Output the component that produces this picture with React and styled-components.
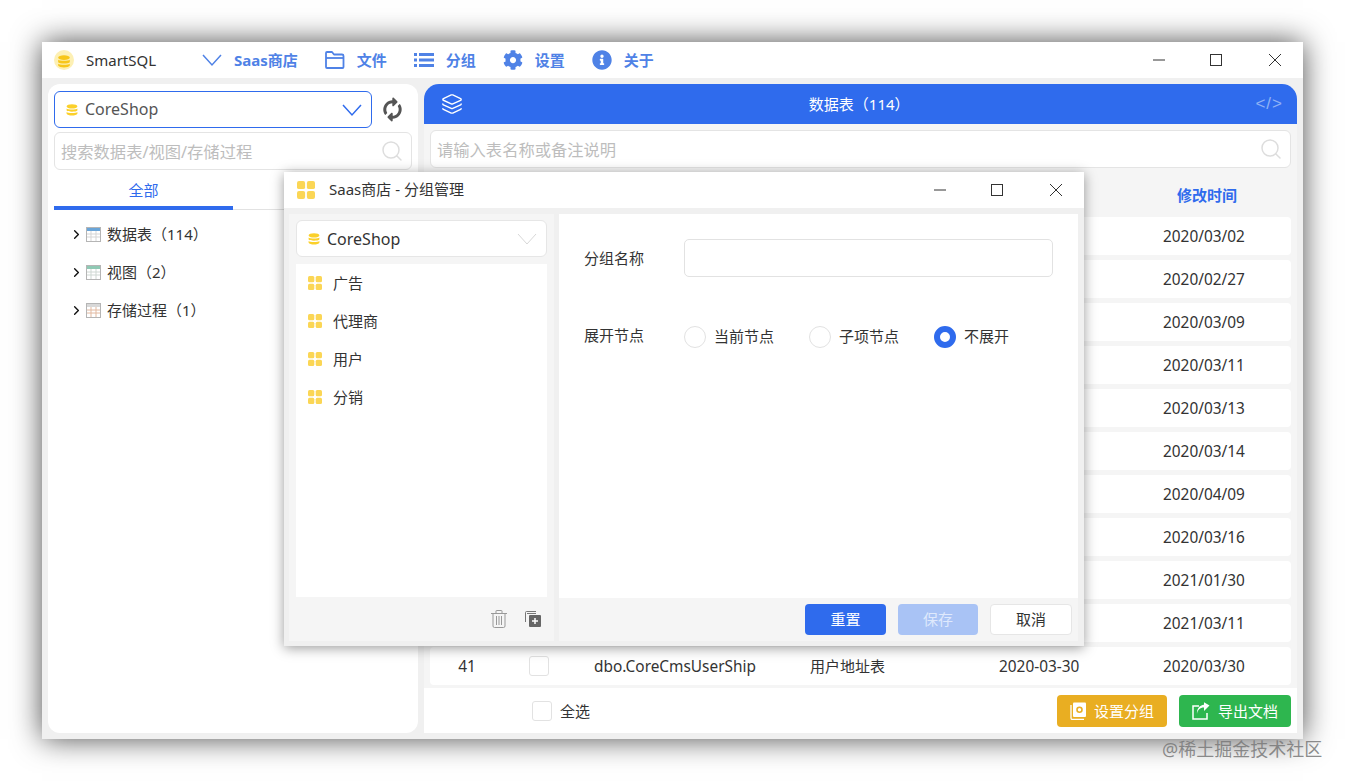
import React from 'react';
import styled, { createGlobalStyle } from 'styled-components';
import { ChevronRight, Layers, Search } from 'lucide-react';
import { FaCog, FaInfoCircle, FaSyncAlt } from 'react-icons/fa';

const blue = '#2f6bed';
const menuBlue = '#4f82e6';
const text = '#333';

const GlobalStyle = createGlobalStyle`
	html, body {
		margin: 0;
		background: #fff;
		font-family: "Noto Sans", "Noto Sans CJK SC", sans-serif;
		font-size: 15px;
		color: ${text};
	}
	* {
		box-sizing: border-box;
	}
`;

const Page = styled.div`
	position: relative;
	width: 1345px;
	height: 781px;
	padding: 42px;
	overflow: hidden;
`;

const Window = styled.div`
	position: relative;
	width: 1261px;
	height: 697px;
	background: #f0f0f0;
	box-shadow: 0 0 28px rgba(0, 0, 0, 0.7);
	display: flex;
	flex-direction: column;
`;

// CJK glyphs sit a little low in a flex row, this lifts the words and not the icons
const Txt = styled.span`
	padding-bottom: 2px;
`;

const TitleBar = styled.div`
	height: 36px;
	flex: none;
	background: #fff;
	display: flex;
	align-items: center;
	padding-left: 12px;
`;

const AppName = styled.span`
	font-size: 15px;
	margin-left: 12px;
	width: 116px;
	padding-bottom: 1px;
`;

const Menu = styled.div`
	display: flex;
	align-items: center;
	gap: 27px;
	flex: 1;
`;

const MenuItem = styled.div`
	display: flex;
	align-items: center;
	gap: 12px;
	color: ${menuBlue};
	font-size: 15px;
	font-weight: 700;
	svg {
		flex: none;
	}
`;

const WinControls = styled.div`
	display: flex;
	align-items: center;
	color: ${text};
	padding-right: 22px;
	gap: 45px;
	svg:last-child {
		margin-left: 2px;
	}
`;

const Body = styled.div`
	flex: 1;
	display: flex;
	gap: 6px;
	padding: 6px;
	min-height: 0;
`;

const LeftPanel = styled.aside`
	width: 370px;
	flex: none;
	background: #fff;
	border-radius: 12px;
	padding: 7px 6px;
`;

const SelectRow = styled.div`
	display: flex;
	align-items: center;
	color: #555;
`;

const RefreshSlot = styled.div`
	width: 40px;
	display: flex;
	justify-content: center;
	svg {
		transform: rotate(-45deg);
	}
`;

const Select = styled.div`
	flex: none;
	width: ${(p) => (p.$focus ? '318px' : '100%')};
	height: 37px;
	display: flex;
	align-items: center;
	gap: 7px;
	padding: 0 9px 0 11px;
	background: #fff;
	border-radius: 6px;
	border: 1px solid ${(p) => (p.$focus ? blue : '#e6e6e6')};
	font-size: 16px;
	span {
		flex: 1;
		padding-bottom: ${(p) => (p.$focus ? '2px' : '0')};
	}
`;

const SearchBox = styled.div`
	height: 38px;
	margin: ${(p) => p.$margin || '4px 0 0'};
	border: 1px solid #e4e4e4;
	border-radius: 6px;
	background: #fff;
	display: flex;
	align-items: center;
	justify-content: space-between;
	padding: 0 7px 0 6px;
	color: #bdbdbd;
	font-size: 16.3px;
`;

const Tabs = styled.div`
	height: 40px;
	border-bottom: 1px solid #e2e2e2;
	display: flex;
`;

const Tab = styled.div`
	width: 179px;
	height: 40px;
	padding-top: 2px;
	border-bottom: 4px solid ${blue};
	color: ${blue};
	font-size: 15px;
	display: flex;
	align-items: center;
	justify-content: center;
`;

const Tree = styled.div`
	margin-top: 5px;
	padding-left: 15px;
`;

const TreeRow = styled.div`
	height: 38px;
	display: flex;
	align-items: center;
	font-size: 15px;
	color: #333;
	gap: 6px;
	svg:first-child {
		color: #111;
		margin-right: -4px;
	}
`;

const RightPanel = styled.main`
	flex: 1;
	min-width: 0;
	display: flex;
	flex-direction: column;
	background: #f5f5f5;
	border-radius: 15px 15px 0 0;
`;

const BlueHeader = styled.div`
	height: 40px;
	flex: none;
	background: ${blue};
	border-radius: 15px 15px 0 0;
	color: #fff;
	font-size: 15px;
	display: flex;
	align-items: center;
	justify-content: space-between;
	padding: 0 14px 0 17px;
`;

const CodeMark = styled.span`
	color: #8fb2f5;
	font-size: 17px;
	letter-spacing: 1px;
	font-family: "Liberation Sans", sans-serif;
`;

const Table = styled.div`
	flex: 1;
	display: flex;
	flex-direction: column;
	gap: 5px;
	padding: 0 6px;
`;

const cols = '72px 92px 216px 189px 164px 1fr';

const HeadRow = styled.div`
	height: 39px;
	display: grid;
	grid-template-columns: ${cols};
	align-items: center;
	padding-top: 3px;
`;

const HeadCell = styled.div`
	grid-column: 6;
	color: ${blue};
	font-size: 15px;
	font-weight: 700;
	margin-left: 14px;
`;

const Row = styled.div`
	height: 38px;
	flex: none;
	background: #fff;
	border-radius: 4px;
	display: grid;
	grid-template-columns: ${cols};
	align-items: center;
	font-size: 15px;
`;

const Num = styled.div`
	text-align: center;
	font-size: 15.5px;
	padding-left: 2px;
`;

const LatinCell = styled.span`
	font-size: 15.4px;
	grid-column: ${(p) => p.$col || 'auto'};
`;

const Checkbox = styled.div`
	width: 20px;
	height: 20px;
	flex: none;
	border: 1px solid #e2e2e2;
	border-radius: 3px;
	background: #fff;
	margin-left: ${(p) => p.$left || 0}px;
`;

const Footer = styled.div`
	height: 45px;
	margin-top: 3px;
	flex: none;
	background: #fff;
	display: flex;
	align-items: center;
	padding: 0 6px 0 108px;
	font-size: 15px;
	gap: 8px;
	white-space: nowrap;
`;

const FooterActions = styled.div`
	margin-left: auto;
	display: flex;
	gap: 12px;
`;

const ActionButton = styled.button`
	height: 32px;
	width: ${(p) => p.$w}px;
	border: none;
	border-radius: 4px;
	background: ${(p) => p.$bg};
	color: #fff;
	font: inherit;
	display: flex;
	align-items: center;
	justify-content: center;
	gap: 8px;
`;

const Dialog = styled.section`
	position: absolute;
	left: 242px;
	top: 130px;
	width: 800px;
	height: 474px;
	background: #f0f0f0;
	box-shadow: 0 2px 12px rgba(0, 0, 0, 0.4);
	display: flex;
	flex-direction: column;
`;

const DialogTitle = styled.div`
	height: 36px;
	flex: none;
	background: #fff;
	display: flex;
	align-items: center;
	padding-left: 13px;
	font-size: 15px;
	span {
		margin-left: 14px;
		flex: 1;
		padding-bottom: 4px;
	}
`;

const DialogBody = styled.div`
	flex: 1;
	min-height: 0;
	display: flex;
	gap: 5px;
	padding: 6px 6px 5px 5px;
`;

const GroupSide = styled.div`
	width: 265px;
	flex: none;
	background: #f5f5f5;
	padding: 6px 7px 0;
	display: flex;
	flex-direction: column;
`;

const GroupList = styled.div`
	flex: 1;
	margin-top: 7px;
	background: #fff;
`;

const GroupItem = styled.div`
	height: 38px;
	display: flex;
	align-items: center;
	gap: 11px;
	padding-left: 12px;
	font-size: 15px;
`;

const GroupTools = styled.div`
	height: 44px;
	flex: none;
	display: flex;
	align-items: center;
	justify-content: flex-end;
	gap: 18px;
	padding-right: 6px;
	color: #999;
`;

const FormSide = styled.div`
	flex: 1;
	min-width: 0;
	background: #f5f5f5;
	display: flex;
	flex-direction: column;
`;

const Form = styled.div`
	flex: 1;
	background: #fff;
	padding: 25px 25px 0;
`;

const FormRow = styled.div`
	display: flex;
	align-items: center;
	font-size: 15px;
	margin-bottom: ${(p) => p.$mb || 0}px;
`;

const Label = styled.label`
	width: 100px;
	flex: none;
	padding-bottom: ${(p) => p.$lift || 2}px;
`;

const TextInput = styled.div`
	width: 369px;
	height: 38px;
	border: 1px solid #e2e2e2;
	border-radius: 5px;
`;

const RadioOption = styled.div`
	width: 125px;
	flex: none;
	display: flex;
	align-items: center;
	gap: 8px;
`;

const RadioDot = styled.div`
	width: 22px;
	height: 22px;
	border-radius: 50%;
	background: #fff;
	border: ${(p) => (p.$on ? `6px solid ${blue}` : '1px solid #e2e2e2')};
`;

const FormFooter = styled.div`
	height: 43px;
	flex: none;
	display: flex;
	align-items: center;
	justify-content: flex-end;
	gap: 12px;
	padding-right: 6px;
`;

const DialogButton = styled.button`
	width: ${(p) => p.$w || 80}px;
	height: 31px;
	padding: 0 0 2px;
	border-radius: 4px;
	border: ${(p) => (p.$plain ? '1px solid #e6e6e6' : 'none')};
	background: ${(p) => (p.$plain ? '#fff' : p.$off ? '#a9c3f5' : blue)};
	color: ${(p) => (p.$plain ? text : p.$off ? '#dfe9fc' : '#fff')};
	font: inherit;
	font-size: 15px;
`;

const Watermark = styled.div`
	position: absolute;
	left: 1162px;
	top: 735px;
	font-size: 18px;
	color: rgba(120, 120, 120, 0.85);
	white-space: nowrap;
`;

const Chevron = ({ color = 'currentColor', width = 1.5 }) => (
	<svg width="20" height="20" viewBox="0 0 20 20" fill="none" stroke={color} strokeWidth={width}>
		<path d="M1 5l9 10 9-10" />
	</svg>
);

// yellow database stack
const DbIcon = ({ size = 12 }) => (
	<svg width={size} height={size} viewBox="0 0 12 12">
		<ellipse cx="6" cy="2.4" rx="5.4" ry="2.2" fill="#fbd02a" />
		<path d="M.6 4.4c1 1.3 9.8 1.3 10.8 0v2.2c-1 1.6-9.8 1.6-10.8 0z" fill="#fbd02a" />
		<path d="M.6 8c1 1.3 9.8 1.3 10.8 0v1.8c-1 2.4-9.8 2.4-10.8 0z" fill="#fbd02a" />
	</svg>
);

const AppLogo = () => (
	<svg width="20" height="20" viewBox="0 0 20 20">
		<circle cx="10" cy="10" r="10" fill="#fdf0b4" />
		<g transform="translate(3.5 5) scale(1.08)">
			<ellipse cx="6" cy="2.4" rx="5.4" ry="2.2" fill="#f7c61a" />
			<path d="M.6 4.4c1 1.3 9.8 1.3 10.8 0v2.2c-1 1.6-9.8 1.6-10.8 0z" fill="#f7c61a" />
			<path d="M.6 8c1 1.3 9.8 1.3 10.8 0v1.8c-1 2.4-9.8 2.4-10.8 0z" fill="#f7c61a" />
		</g>
	</svg>
);

const GroupIcon = ({ size = 14 }) => (
	<svg width={size} height={size} viewBox="0 0 14 14" fill="#fbd655">
		<rect x="0" y="0" width="6.3" height="6.3" rx="1.5" />
		<rect x="7.7" y="0" width="6.3" height="6.3" rx="1.5" />
		<rect x="0" y="7.7" width="6.3" height="6.3" rx="1.5" />
		<rect x="7.7" y="7.7" width="6.3" height="6.3" rx="1.5" />
	</svg>
);

const FolderIcon = () => (
	<svg width="20" height="20" viewBox="0 0 20 20" fill="none" stroke={menuBlue} strokeWidth="1.8" strokeLinejoin="round">
		<path d="M1 3a1 1 0 0 1 1-1h5l2 2.5h8a1.500 1.500 0 0 1 1.500 1.500v11a1 1 0 0 1-1 1H2a1 1 0 0 1-1-1z" />
		<path d="M1 8h18" />
	</svg>
);

const ListIcon = () => (
	<svg width="20" height="20" viewBox="0 0 20 20" fill={menuBlue}>
		<rect x="0" y="3" width="3" height="3" />
		<rect x="0" y="8.500" width="3" height="3" />
		<rect x="0" y="14" width="3" height="3" />
		<rect x="5" y="3" width="15" height="3" />
		<rect x="5" y="8.500" width="15" height="3" />
		<rect x="5" y="14" width="15" height="3" />
	</svg>
);

// small table glyphs for the tree, head colour varies by node type
const TableIcon = ({ head, line }) => (
	<svg width="15" height="15" viewBox="0 0 15 15">
		<rect x=".5" y=".5" width="14" height="14" fill="#fff" stroke="#b5b5b5" />
		<rect x="1" y="1" width="13" height="3" fill={head} />
		<path d="M1 7h13M1 10h13M5 4v10M10 4v10" stroke={line} strokeWidth="1" fill="none" />
	</svg>
);

const TrashIcon = () => (
	<svg width="16" height="18" viewBox="0 0 16 18" fill="none" stroke="#999" strokeWidth="1">
		<path d="M0 3.500h16M5 3.500V1a.5.5 0 0 1 .5-.5h5a.5.5 0 0 1 .5.500v2.500" />
		<path d="M2 3.500V16a1.500 1.500 0 0 0 1.500 1.500h9A1.500 1.500 0 0 0 14 16V3.500" />
		<path d="M5.500 6v9M8 6v9M10.500 6v9" />
	</svg>
);

const CopyAddIcon = () => (
	<svg width="16" height="16" viewBox="0 0 16 16">
		<path d="M11 .5H1.500a1 1 0 0 0-1 1V11" fill="none" stroke="#777" />
		<rect x="2" y="2" width="9" height="1" fill="#777" />
		<rect x="4" y="4" width="12" height="12" rx="1" fill="#666" />
		<path d="M10 7v6M7 10h6" stroke="#fff" strokeWidth="1.500" />
	</svg>
);

const BookGearIcon = () => (
	<svg width="16" height="18" viewBox="0 0 16 18" fill="none">
		<path d="M1 3v13a1.500 1.500 0 0 0 1.500 1.500H14" stroke="#fff" strokeWidth="1.300" />
		<rect x="3" y="0.500" width="13" height="14.500" rx="1" fill="#fff" />
		<circle cx="9.500" cy="7.700" r="2.500" stroke="#e9ae22" strokeWidth="1.600" />
	</svg>
);

const ShareIcon = () => (
	<svg width="18" height="18" viewBox="0 0 18 18" fill="none" stroke="#fff" strokeWidth="1.500">
		<path d="M7 4H1v13h14v-6" />
		<path d="M5 12c.5-4 3-6.500 7-6.500V9l5.500-5.500L12 .2v2.500C7.500 3 4.500 7 5 12z" fill="#fff" stroke="none" />
	</svg>
);

const WindowButtons = () => (
	<WinControls>
		<svg width="12" height="12" viewBox="0 0 12 12" stroke="currentColor" fill="none">
			<path d="M0 6h12" />
		</svg>
		<svg width="12" height="12" viewBox="0 0 12 12" stroke="currentColor" fill="none">
			<rect x=".5" y=".5" width="11" height="11" />
		</svg>
		<svg width="12" height="12" viewBox="0 0 12 12" stroke="currentColor" fill="none">
			<path d="M0 0l12 12M12 0L0 12" />
		</svg>
	</WinControls>
);

const menu = [
	{ icon: <Chevron />, label: 'Saas商店' },
	{ icon: <FolderIcon />, label: '文件' },
	{ icon: <ListIcon />, label: '分组' },
	{ icon: <FaCog size={20} />, label: '设置' },
	{ icon: <FaInfoCircle size={20} />, label: '关于' },
];

const tree = [
	{ label: '数据表（114）', head: '#6aa5d8', line: '#d5d5d5' },
	{ label: '视图（2）', head: '#8fc9b4', line: '#cfd8d3' },
	{ label: '存储过程（1）', head: '#d8d8d8', line: '#e2b9a0' },
];

const dates = [
	'2020/03/02', '2020/02/27', '2020/03/09', '2020/03/11', '2020/03/13',
	'2020/03/14', '2020/04/09', '2020/03/16', '2021/01/30', '2021/03/11',
];

const groups = ['广告', '代理商', '用户', '分销'];

const App = () => (
	<Page>
		<GlobalStyle />
		<Window>
			<TitleBar>
				<AppLogo />
				<AppName>SmartSQL</AppName>
				<Menu>
					{menu.map((m) => (
						<MenuItem key={m.label}>
							{m.icon}
							<Txt>{m.label}</Txt>
						</MenuItem>
					))}
				</Menu>
				<WindowButtons />
			</TitleBar>
			<Body>
				<LeftPanel>
					<SelectRow>
						<Select $focus>
							<DbIcon />
							<span>CoreShop</span>
							<Chevron color={blue} />
						</Select>
						<RefreshSlot>
							<FaSyncAlt size={19} />
						</RefreshSlot>
					</SelectRow>
					<SearchBox>
						搜索数据表/视图/存储过程
						<Search size={24} strokeWidth={1.500} color="#ddd" />
					</SearchBox>
					<Tabs>
						<Tab>全部</Tab>
					</Tabs>
					<Tree>
						{tree.map((t) => (
							<TreeRow key={t.label}>
								<ChevronRight size={15} strokeWidth={2.200} />
								<TableIcon head={t.head} line={t.line} />
								<Txt>{t.label}</Txt>
							</TreeRow>
						))}
					</Tree>
				</LeftPanel>
				<RightPanel>
					<BlueHeader>
						<Layers size={22} strokeWidth={1.500} />
						<Txt>数据表（114）</Txt>
						<CodeMark>&lt;/&gt;</CodeMark>
					</BlueHeader>
					<Table>
						<SearchBox $margin="6px 0 0">
							请输入表名称或备注说明
							<Search size={24} strokeWidth={1.500} color="#ddd" />
						</SearchBox>
						<HeadRow>
							<HeadCell>修改时间</HeadCell>
						</HeadRow>
						{dates.map((d) => (
							<Row key={d}>
								<LatinCell $col={6}>{d}</LatinCell>
							</Row>
						))}
						<Row>
							<Num>41</Num>
							<Checkbox $left={27} />
							<LatinCell>dbo.CoreCmsUserShip</LatinCell>
							<Txt>用户地址表</Txt>
							<LatinCell>2020-03-30</LatinCell>
							<LatinCell>2020/03/30</LatinCell>
						</Row>
					</Table>
					<Footer>
						<Checkbox />
						全选
						<FooterActions>
							<ActionButton $w={110} $bg="#e9ae22">
								<BookGearIcon />
								设置分组
							</ActionButton>
							<ActionButton $w={112} $bg="#2eb64f">
								<ShareIcon />
								导出文档
							</ActionButton>
						</FooterActions>
					</Footer>
				</RightPanel>
			</Body>
			<Dialog>
				<DialogTitle>
					<GroupIcon size={18} />
					<span>Saas商店 - 分组管理</span>
					<WindowButtons />
				</DialogTitle>
				<DialogBody>
					<GroupSide>
						<Select>
							<DbIcon />
							<span>CoreShop</span>
							<Chevron color="#d8d8d8" width={1} />
						</Select>
						<GroupList>
							{groups.map((g) => (
								<GroupItem key={g}>
									<GroupIcon />
									<Txt>{g}</Txt>
								</GroupItem>
							))}
						</GroupList>
						<GroupTools>
							<TrashIcon />
							<CopyAddIcon />
						</GroupTools>
					</GroupSide>
					<FormSide>
						<Form>
							<FormRow $mb={47}>
								<Label>分组名称</Label>
								<TextInput />
							</FormRow>
							<FormRow>
								<Label $lift={4}>展开节点</Label>
								<RadioOption>
									<RadioDot />
									<Txt>当前节点</Txt>
								</RadioOption>
								<RadioOption>
									<RadioDot />
									<Txt>子项节点</Txt>
								</RadioOption>
								<RadioOption>
									<RadioDot $on />
									<Txt>不展开</Txt>
								</RadioOption>
							</FormRow>
						</Form>
						<FormFooter>
							<DialogButton $w={81}>重置</DialogButton>
							<DialogButton $off>保存</DialogButton>
							<DialogButton $plain $w={82}>取消</DialogButton>
						</FormFooter>
					</FormSide>
				</DialogBody>
			</Dialog>
		</Window>
		<Watermark>@稀土掘金技术社区</Watermark>
	</Page>
);

export default App;
